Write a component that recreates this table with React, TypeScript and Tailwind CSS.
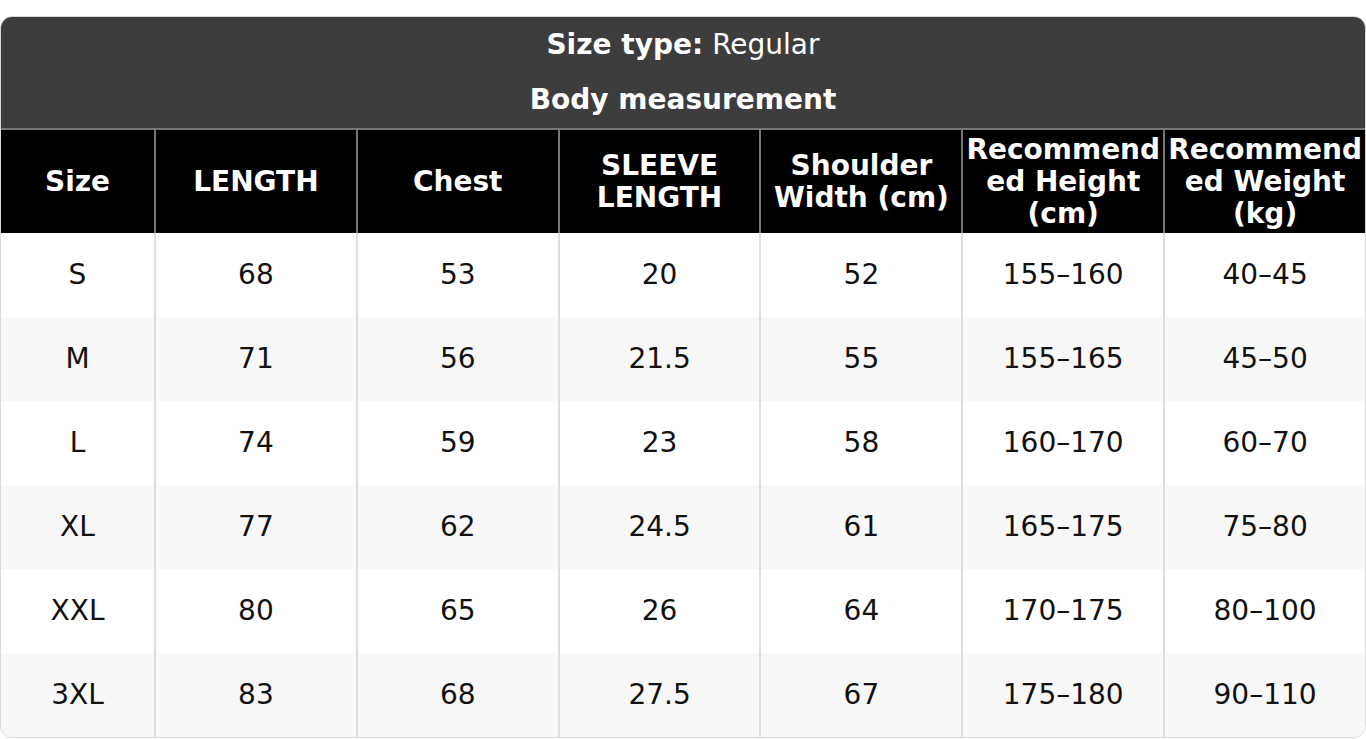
const headers = [
  "Size",
  "LENGTH",
  "Chest",
  "SLEEVE LENGTH",
  "Shoulder Width (cm)",
  "Recommended Height (cm)",
  "Recommended Weight (kg)",
];

const rows = [
  ["S", "68", "53", "20", "52", "155–160", "40–45"],
  ["M", "71", "56", "21.5", "55", "155–165", "45–50"],
  ["L", "74", "59", "23", "58", "160–170", "60–70"],
  ["XL", "77", "62", "24.5", "61", "165–175", "75–80"],
  ["XXL", "80", "65", "26", "64", "170–175", "80–100"],
  ["3XL", "83", "68", "27.5", "67", "175–180", "90–110"],
];

const cols = "grid grid-cols-[153px_repeat(6,minmax(0,1fr))]";

export default function App() {
  return (
    <div
      className="min-h-screen bg-white pt-[16px]"
      style={{ fontFamily: '"DejaVu Sans", "Liberation Sans", sans-serif' }}
    >
      <div className="rounded-[12px] overflow-hidden border border-[#d9d9d9] text-[28px] leading-[32px]">
        {/* Title block */}
        <div className="bg-[#3d3d3d] text-white text-center">
          <div className="h-[55px] flex items-center justify-center">
            <span className="font-bold">Size type:</span>
            <span className="ml-[9px]">Regular</span>
          </div>
          <div className="h-[56px] flex items-center justify-center font-bold">
            Body measurement
          </div>
        </div>

        {/* Header row */}
        <div className={`${cols} bg-black border-t-2 border-[#777]`}>
          {headers.map((h, i) => (
            <div
              key={h}
              className={`h-[103px] flex items-center justify-center text-center text-white font-bold px-[2px] ${
                i > 0 ? "border-l-2 border-[#777]" : ""
              }`}
            >
              <span className="block w-full break-words">{h}</span>
            </div>
          ))}
        </div>

        {/* Body rows */}
        {rows.map((r, ri) => (
          <div
            key={r[0]}
            className={`${cols} ${ri % 2 === 1 ? "bg-[#f8f8f8]" : "bg-white"}`}
          >
            {r.map((c, ci) => (
              <div
                key={ci}
                className={`h-[84px] flex items-center justify-center text-[#111] ${
                  ci > 0 ? "border-l-2 border-[#dedede]" : ""
                }`}
              >
                {c}
              </div>
            ))}
          </div>
        ))}
      </div>
    </div>
  );
}
